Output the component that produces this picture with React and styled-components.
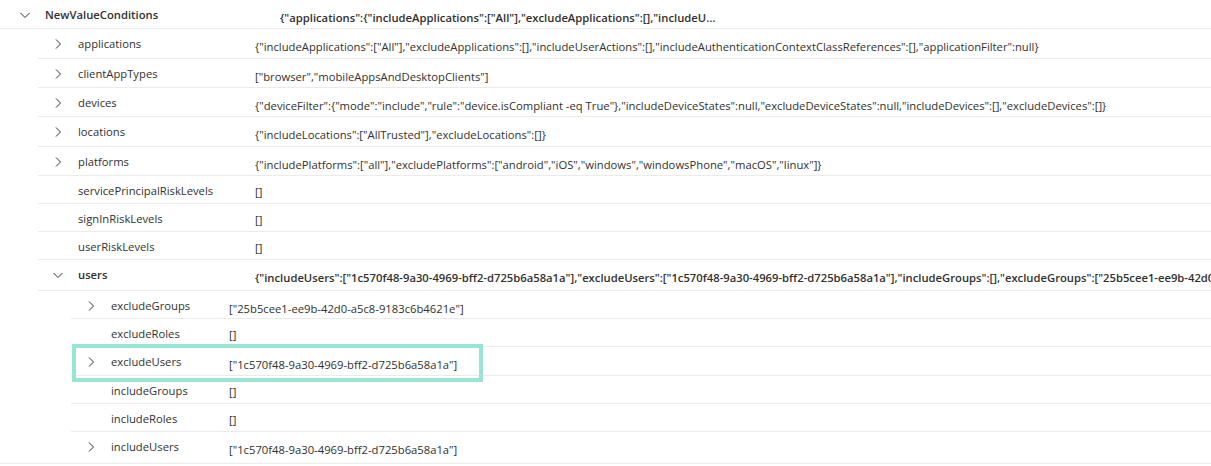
import React from 'react';
import styled, { createGlobalStyle } from 'styled-components';

const GlobalStyle = createGlobalStyle`
  body {
    margin: 0;
    background: #ffffff;
    font-family: "Segoe UI", "Open Sans", sans-serif;
    color: #323130;
  }
`;

const levels = [
  { indent: 0, pad: 5, keyW: 235 },
  { indent: 38, pad: 0, keyW: 177 },
  { indent: 71, pad: 0, keyW: 118 },
];

const tree = {
  name: 'NewValueConditions',
  value: '{"applications":{"includeApplications":["All"],"excludeApplications":[],"includeUserActions":[],"includeAuthenticationContextClassReferences":[],"applicationFilter":null},"users":{}}',
  open: true,
  bold: true,
  clip: true,
  h: 29,
  children: [
    { name: 'applications', h: 30, value: '{"includeApplications":["All"],"excludeApplications":[],"includeUserActions":[],"includeAuthenticationContextClassReferences":[],"applicationFilter":null}', more: true },
    { name: 'clientAppTypes', h: 29, value: '["browser","mobileAppsAndDesktopClients"]', more: true },
    { name: 'devices', h: 29, value: '{"deviceFilter":{"mode":"include","rule":"device.isCompliant -eq True"},"includeDeviceStates":null,"excludeDeviceStates":null,"includeDevices":[],"excludeDevices":[]}', more: true },
    { name: 'locations', h: 30, value: '{"includeLocations":["AllTrusted"],"excludeLocations":[]}', more: true },
    { name: 'platforms', h: 29, value: '{"includePlatforms":["all"],"excludePlatforms":["android","iOS","windows","windowsPhone","macOS","linux"]}', more: true },
    { name: 'servicePrincipalRiskLevels', h: 28, value: '[]' },
    { name: 'signInRiskLevels', h: 28, value: '[]' },
    { name: 'userRiskLevels', h: 28, value: '[]' },
    {
      name: 'users',
      h: 31,
      open: true,
      bold: true,
      value: '{"includeUsers":["1c570f48-9a30-4969-bff2-d725b6a58a1a"],"excludeUsers":["1c570f48-9a30-4969-bff2-d725b6a58a1a"],"includeGroups":[],"excludeGroups":["25b5cee1-ee9b-42d0-a5c8-9183c6b4621e"],"includeRoles":[],"excludeRoles":[]}',
      children: [
        { name: 'excludeGroups', h: 28, value: '["25b5cee1-ee9b-42d0-a5c8-9183c6b4621e"]', more: true },
        { name: 'excludeRoles', h: 28, value: '[]' },
        { name: 'excludeUsers', h: 29, value: '["1c570f48-9a30-4969-bff2-d725b6a58a1a"]', more: true, marked: true },
        { name: 'includeGroups', h: 28, value: '[]' },
        { name: 'includeRoles', h: 28, value: '[]' },
        { name: 'includeUsers', h: 31, value: '["1c570f48-9a30-4969-bff2-d725b6a58a1a"]', more: true, last: true },
      ],
    },
  ],
};

function Chevron({ down }) {
  return (
    <svg width="12" height="12" viewBox="0 0 12 12" style={{ transform: down ? 'rotate(90deg)' : 'none' }}>
      <path d="M4 1.5 L8.5 6 L4 10.5" fill="none" stroke="#323130" strokeWidth="1" />
    </svg>
  );
}

function Node({ node, level }) {
  const lv = levels[level];
  const expandable = node.more || node.open;
  return (
    <Group $level={level}>
      <Row $indent={lv.indent} $pad={lv.pad} $keyW={lv.keyW} $h={node.h} $last={node.last}>
        <Toggle>{expandable && <Chevron down={node.open} />}</Toggle>
        <Key $bold={node.bold}>{node.name}</Key>
        <Value $bold={node.bold} $clip={node.clip} $drop={expandable ? 3 : 1}>{node.value}</Value>
        {node.marked && <Marker />}
      </Row>
      {node.open && node.children && node.children.map((c) => (
        <Node key={c.name} node={c} level={level + 1} />
      ))}
    </Group>
  );
}

export default function App() {
  return (
    <>
      <GlobalStyle />
      <Tree>
        <Node node={tree} level={0} />
      </Tree>
    </>
  );
}

const Tree = styled.div`
  width: 1211px;
  overflow: hidden;
  font-size: 11.25px;
`;

const Group = styled.div`
  border-bottom: ${(p) => (p.$level === 0 ? '1px solid #edebe9' : 'none')};
`;

const Row = styled.div`
  position: relative;
  display: grid;
  grid-template-columns: 40px ${(p) => p.$keyW}px 1fr;
  align-items: start;
  height: ${(p) => p.$h}px;
  box-sizing: border-box;
  margin-left: ${(p) => p.$indent}px;
  padding-left: ${(p) => p.$pad}px;
  border-bottom: ${(p) => (p.$last ? 'none' : '1px solid #edebe9')};
`;

const Toggle = styled.div`
  display: flex;
  justify-content: flex-start;
  padding-left: 14px;
  padding-top: 9px;
  height: 12px;
`;

const Key = styled.div`
  padding-top: 7px;
  line-height: 16px;
  white-space: nowrap;
  font-weight: ${(p) => (p.$bold ? 600 : 400)};
`;

const Value = styled.div`
  padding-top: ${(p) => 7 + p.$drop}px;
  line-height: 16px;
  white-space: nowrap;
  overflow: hidden;
  max-width: ${(p) => (p.$clip ? '436px' : 'none')};
  text-overflow: ${(p) => (p.$clip ? 'ellipsis' : 'clip')};
  font-weight: ${(p) => (p.$bold ? 600 : 400)};
`;

const Marker = styled.div`
  position: absolute;
  left: 1px;
  top: -3px;
  width: 411px;
  height: 38px;
  box-sizing: border-box;
  border: 4px solid #98e5d6;
  pointer-events: none;
`;
